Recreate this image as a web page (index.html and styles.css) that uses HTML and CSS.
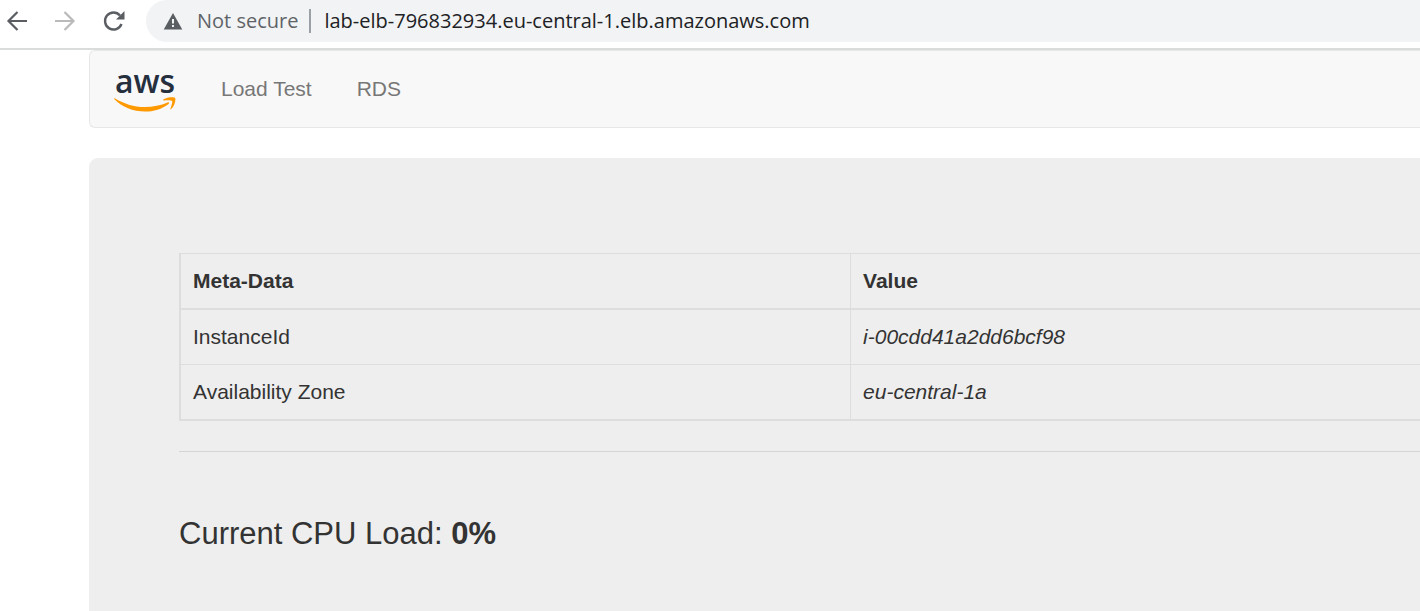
FILE: index.html
```html
<!DOCTYPE html>
<html lang="en">
<head>
<meta charset="utf-8">
<title>Load Balancer Lab</title>
<link rel="stylesheet" href="styles.css">
</head>
<body>
<header class="toolbar">
  <button class="tool" type="button" aria-label="Back">
    <svg width="24" height="24" viewBox="0 0 24 24" fill="none" stroke="#5a5e63" stroke-width="2.200"><path d="M23 12H4.500M13.500 3l-9 9 9 9"/></svg>
  </button>
  <button class="tool" type="button" aria-label="Forward">
    <svg width="24" height="24" viewBox="0 0 24 24" fill="none" stroke="#bababc" stroke-width="2.200"><path d="M2 12h18.500M11.500 3l9 9-9 9"/></svg>
  </button>
  <button class="tool" type="button" aria-label="Reload">
    <svg width="24" height="24" viewBox="0 0 24 24"><path d="M19.500 15A8.500 8.500 0 1 1 18 6.500" fill="none" stroke="#5a5e63" stroke-width="2.400"/><path d="M22.500 2v8.500H14z" fill="#5a5e63"/></svg>
  </button>
  <div class="address">
    <button class="security" type="button">
      <svg width="20" height="20" viewBox="0 0 20 20"><path d="M10 2L19.300 18.500H.700z" fill="#5a5e63"/><path d="M9 8h2v4.500H9zM9 14h2v2H9z" fill="#f1f3f4"/></svg>
      <span>Not secure</span>
    </button>
    <span class="divider"></span>
    <input class="url" type="text" aria-label="Address" value="lab-elb-796832934.eu-central-1.elb.amazonaws.com">
  </div>
</header>
<div class="page">
  <nav class="navbar">
    <a class="brand" href="#" aria-label="AWS home">
      <span class="brand-name">aws</span>
      <svg class="smile" width="62" height="16" viewBox="0 0 62 16" fill="#ff9900"><path d="M.800 1.200C9 6.500 20 10 31 10c8 0 16-1.800 22.500-4.600 1.200-.500 2.200.700 1.100 1.500C48 12 39.500 14.600 31 14.600 19 14.600 8 10 .400 2.300c-.600-.700-.200-1.400.400-1.100z"/><path d="M49.500 2.300C53 0 59.800-.300 61 .800c1.200 1.300-.300 8.300-3.800 11.300-.600.500-1.100.200-.800-.500 1-2.300 2.400-6.600 1.700-7.700-.800-1.100-5.300-.700-8-.500-.900.100-1.300-.600-.600-1.100z"/></svg>
    </a>
    <a class="nav-link" href="#">Load Test</a>
    <a class="nav-link" href="#">RDS</a>
  </nav>
  <main class="panel">
    <table class="metadata">
      <thead>
        <tr><th class="name" scope="col">Meta-Data</th><th scope="col">Value</th></tr>
      </thead>
      <tbody>
        <tr><td>InstanceId</td><td><i>i-00cdd41a2dd6bcf98</i></td></tr>
        <tr><td>Availability Zone</td><td><i>eu-central-1a</i></td></tr>
      </tbody>
    </table>
    <hr class="rule">
    <p class="load">Current CPU Load: <b>0%</b></p>
  </main>
</div>
</body>
</html>
```
FILE: styles.css
```css
* {
  box-sizing: border-box;
}

body {
  display: flex;
  flex-direction: column;
  min-height: 100vh;
  margin: 0;
  background: #fff;
  color: #333;
  font: 21px/30px "Liberation Sans", Arial, sans-serif;
}

button,
input {
  padding: 0;
  border: 0;
  background: none;
  color: inherit;
  font: inherit;
}

.toolbar {
  display: flex;
  gap: 25px;
  padding: 0 0 6px 4px;
  border-bottom: 2px solid #dadcdc;
  font: 20px/28px "Open Sans", "Noto Sans", sans-serif;
}

.tool {
  display: flex;
  align-items: center;
  width: 24px;
}

.address {
  display: flex;
  flex: 1;
  align-items: center;
  height: 42px;
  margin-left: -5px;
  padding-left: 17px;
  border-radius: 21px 0 0 21px;
  background: #f1f3f4;
}

.security {
  display: flex;
  align-items: center;
  gap: 14px;
  color: #5f6368;
}

.divider {
  width: 2px;
  height: 24px;
  margin: 0 13px 0 11px;
  background: #9aa0a6;
}

.url {
  flex: 1;
  min-width: 0;
  color: #202124;
}

.page {
  display: flex;
  flex: 1;
  flex-direction: column;
  gap: 30px;
  padding-left: 89px;
}

.navbar {
  display: flex;
  align-items: center;
  gap: 45px;
  height: 78px;
  padding-left: 24px;
  border: 1px solid #e7e7e7;
  border-right: 0;
  border-radius: 6px 0 0 6px;
  background: #f8f8f8;
}

.brand {
  display: flex;
  flex-direction: column;
  align-items: center;
  color: #252f3e;
  text-decoration: none;
}

.brand-name {
  font: 600 32px/32px "Open Sans", sans-serif;
}

.nav-link {
  color: #777;
  text-decoration: none;
}

.panel {
  flex: 1;
  padding: 95px 0 60px 90px;
  border-radius: 9px 0 0 0;
  background: #eee;
}

.metadata {
  width: 100%;
  border-left: 2px solid #ddd;
  border-spacing: 0;
}

.metadata th,
.metadata td {
  padding: 12px;
  border-bottom: 1px solid #ddd;
  text-align: left;
}

.metadata th {
  border-top: 1px solid #ddd;
  border-bottom-width: 2px;
}

.metadata tr > :last-child {
  border-left: 1px solid #ddd;
}

.metadata tbody tr:last-child td {
  border-bottom-width: 2px;
}

.name {
  width: 54%;
}

.rule {
  height: 1px;
  margin: 30px 0 60px;
  border: 0;
  background: #d5d5d5;
}

.load {
  margin: 0;
  font-size: 31px;
  line-height: 44px;
}
```
